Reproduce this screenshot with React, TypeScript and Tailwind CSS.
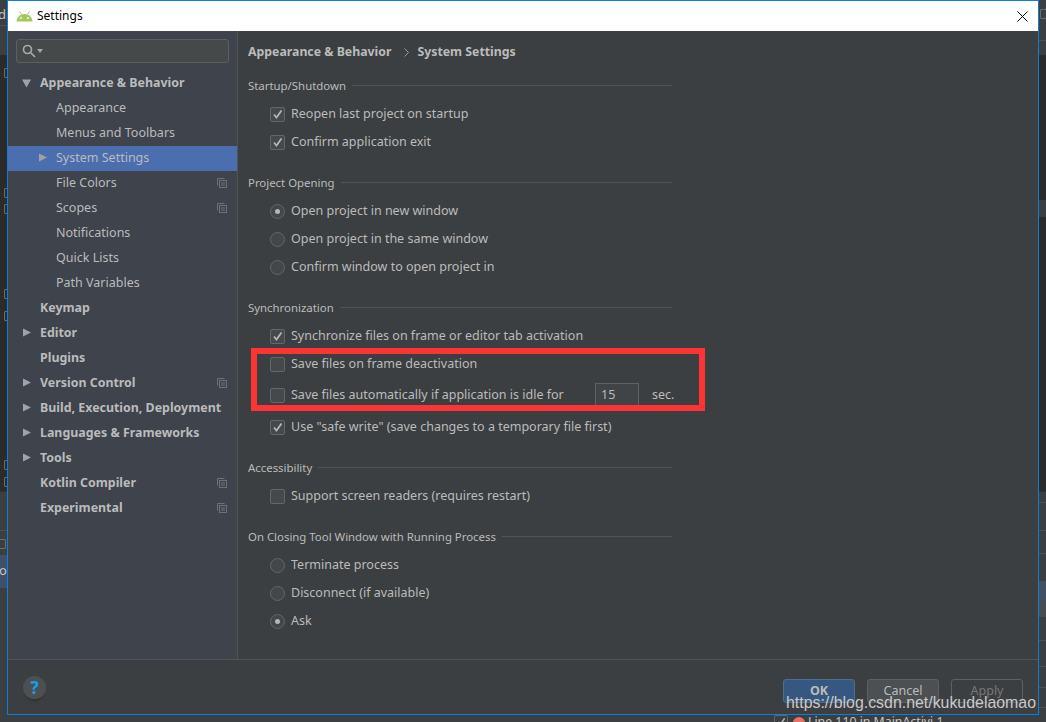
import React from "react";

const font = "[font-family:'Noto_Sans',sans-serif]";

function Copy() {
  return (
    <svg width="10" height="10" viewBox="0 0 10 10" fill="none" stroke="#6f7274" strokeWidth="1" className="mb-[2px] shrink-0">
      <path d="M0.5 7.5V0.5H7.5" />
      <rect x="2.5" y="2.5" width="7" height="7" />
      <path d="M4 5H8M4 7H8" />
    </svg>
  );
}

function Arrow({ down }: { down?: boolean }) {
  return (
    <svg width="9" height="9" viewBox="0 0 9 9" fill="#a0a2a4" className="block shrink-0">
      {down ? <path d="M0 0.5H9L4.5 8.5Z" /> : <path d="M0 0.5L8 4.5L0 8.5Z" />}
    </svg>
  );
}

function Nav({ label, level = 0, arrow, copy, selected }: { label: string; level?: 0 | 1; arrow?: "right" | "down"; copy?: boolean; selected?: boolean }) {
  return (
    <div className={`relative flex h-[25px] items-center pr-[10px] ${selected ? "bg-[#4b6eaf]" : ""} ${level === 0 ? "pl-[32px] text-[12.4px] font-bold" : "pl-[48px] text-[12.5px]"}`}>
      {arrow && (
        <span className={`absolute ${arrow === "down" ? "left-[14px] top-[8px]" : level === 0 ? "left-[15px] top-[7px]" : "left-[31px] top-[7px]"}`}>
          <Arrow down={arrow === "down"} />
        </span>
      )}
      <span className="flex-1 whitespace-nowrap">{label}</span>
      {copy && <Copy />}
    </div>
  );
}

function Heading({ label, first }: { label: string; first?: boolean }) {
  return (
    <div className={`flex h-5 items-center gap-[6px] text-[11.4px] ${first ? "" : "mt-[17px]"}`}>
      <span className="whitespace-nowrap">{label}</span>
      <span className="mt-[-2px] h-px flex-1 bg-[#515355]" />
    </div>
  );
}

function Check({ on }: { on?: boolean }) {
  return (
    <span className="flex h-[15px] w-[15px] shrink-0 items-center justify-center rounded-[2px] border border-[#646769] bg-[#45494b]">
      {on && (
        <svg width="11" height="11" viewBox="0 0 11 11" fill="none" stroke="#b4b6b7" strokeWidth="1.8">
          <path d="M2 5.5L4.5 8.5L9.5 1.5" />
        </svg>
      )}
    </span>
  );
}

function Radio({ on }: { on?: boolean }) {
  return (
    <span className="flex h-[15px] w-[15px] shrink-0 items-center justify-center rounded-full border border-[#646769] bg-[#43474a]">
      {on && <span className="h-[5px] w-[5px] rounded-full bg-[#b4b6b7]" />}
    </span>
  );
}

function Row({ children, control, cls = "" }: { children: React.ReactNode; control: React.ReactNode; cls?: string }) {
  return (
    <div className={`flex h-7 items-center gap-[6px] pl-[22px] text-[12.5px] ${cls}`}>
      {control}
      {children}
    </div>
  );
}

function Btn({ label, cls }: { label: string; cls: string }) {
  return (
    <div className={`flex h-[24px] w-[72px] items-center justify-center rounded-[3px] border pt-px text-[12.5px] ${cls}`}>{label}</div>
  );
}

function Android() {
  return (
    <svg width="17" height="11" viewBox="0 0 17 11" fill="#a2c95c">
      <path d="M0.5 10.5C0.8 6 4 3 8.5 3C13 3 16.2 6 16.5 10.5Z" />
      <path d="M3.5 0.5L5.5 3.5M13.5 0.5L11.5 3.5" stroke="#a2c95c" strokeWidth="1" />
      <circle cx="5" cy="7" r="0.9" fill="#fff" />
      <circle cx="12" cy="7" r="0.9" fill="#fff" />
    </svg>
  );
}

function StripIcon({ top, left }: { top: string; left: string }) {
  return <span className={`absolute h-[10px] w-[10px] rounded-[1px] border border-[#6a6d6f] ${top} ${left}`} />;
}

function LeftStrip() {
  return (
    <div className="relative flex h-full w-[7px] flex-col overflow-hidden">
      <div className="h-[25px] bg-[#3c3f41] pt-[8px] text-[13px] leading-none text-[#c4c4c4]"><span className="ml-[-2px] whitespace-nowrap">dr</span></div>
      <div className="h-[30px] border-t border-[#515151] bg-[#3c3f41]" />
      <div className="h-[436px] bg-[#2b2b2b]" />
      <div className="h-[39px] border-t border-[#323232] bg-[#3c3f41]" />
      <div className="h-[25px] border-t border-[#515151] bg-[#3c3f41]" />
      <div className="h-[33px] bg-[#3f5068] pt-[9px] text-[13px] leading-none text-[#c4c4c4]"><span className="ml-[-1px] whitespace-nowrap">ol</span></div>
      <div className="flex-1 bg-[#3c3f41]" />
      <StripIcon top="top-[68px]" left="left-[4px]" />
      <StripIcon top="top-[188px]" left="left-[4px]" />
      <StripIcon top="top-[204px]" left="left-[4px]" />
      <StripIcon top="top-[289px]" left="left-[4px]" />
      <StripIcon top="top-[311px]" left="left-[4px]" />
      <StripIcon top="top-[460px]" left="left-[4px]" />
      <StripIcon top="top-[477px]" left="left-[4px]" />
      <StripIcon top="top-[539px]" left="left-[-4px]" />
    </div>
  );
}

function RightStrip() {
  return (
    <div className="relative flex h-full w-[7px] flex-col overflow-hidden">
      <div className="h-[40px] bg-[#3c3f41]" />
      <div className="h-[15px] border-t border-[#515151] bg-[#3c3f41]" />
      <div className="h-[145px] bg-[#2b2b2b]" />
      <div className="h-[17px] bg-[#3c3f41]" />
      <div className="h-[274px] bg-[#2b2b2b]" />
      <div className="h-[11px] border-t border-[#323232] bg-[#3c3f41]" />
      <div className="h-[28px] border-t border-[#515151] bg-[#3c3f41]" />
      <div className="h-[23px] border-t border-[#515151] bg-[#3c3f41]" />
      <div className="h-[28px] border-t border-[#515151] bg-[#3c3f41]" />
      <div className="h-[20px] bg-[#44505f]" />
      <div className="h-[16px] bg-[#4a4d4f]" />
      <div className="h-[23px] bg-[#3c3f41]" />
      <div className="h-[26px] border-t border-[#515151] bg-[#3c3f41]" />
      <div className="h-[21px] border-t border-[#515151] bg-[#3c3f41]" />
      <div className="h-[20px] border-t border-[#515151] bg-[#3c3f41]" />
      <div className="flex-1 border-t border-[#515151] bg-[#3c3f41]" />
      <StripIcon top="top-[9px]" left="left-[1px]" />
    </div>
  );
}

export default function App() {
  return (
    <div className={`relative h-[722px] w-[1046px] overflow-hidden bg-[#3c3f41] text-[#bbbbbb] ${font}`}>
      <div className="flex h-full justify-between">
        <LeftStrip />
        <RightStrip />
      </div>

      {/* what shows under the dialog */}
      <div className="absolute left-[774px] top-[715px] flex items-center text-[12.3px] leading-[14px] text-[#c4c4c4]">
        <span className="flex h-[14px] w-[14px] items-center justify-center rounded-[2px] border border-[#646769]">
          <svg width="10" height="10" viewBox="0 0 11 11" fill="none" stroke="#b4b6b7" strokeWidth="1.8"><path d="M2 5.5L4.5 8.5L9.5 1.5" /></svg>
        </span>
        <span className="ml-[5px] mt-[2px] h-[12px] w-[12px] rounded-full bg-[#e57368]" />
        <span className="ml-[3px] whitespace-nowrap">Line 110 in MainActivi 1</span>
      </div>

      {/* dialog */}
      <div className="absolute left-[7px] top-0 flex h-[715px] w-[1032px] flex-col border border-[#0e7fd8] bg-[#3c3f41]">
        <div className="flex h-[30px] shrink-0 items-center bg-white pl-[8px] pr-[10px] text-[12px] text-black">
          <Android />
          <span className="ml-[4px] flex-1">Settings</span>
          <svg width="11" height="11" viewBox="0 0 11 11" stroke="#000" strokeWidth="1" fill="none">
            <path d="M0.5 0.5L10.5 10.5M10.5 0.5L0.5 10.5" />
          </svg>
        </div>

        <div className="flex min-h-0 flex-1 border-b border-[#515355]">
          <aside className="flex w-[230px] shrink-0 flex-col border-r border-[#515355] bg-[#3e434c]">
            <div className="mx-[8px] mb-[8px] mt-[8px] flex h-[24px] items-center gap-[1px] rounded-[3px] border border-[#5d5f60] bg-[#45494a] pl-[5px]">
              <svg width="14" height="14" viewBox="0 0 14 14" fill="none" stroke="#a6a8a9" strokeWidth="1.7">
                <circle cx="5.5" cy="5.5" r="4" />
                <path d="M8.5 8.5L13 13" />
              </svg>
              <svg width="6" height="4" viewBox="0 0 6 4" fill="#a6a8a9"><path d="M0 0H6L3 4Z" /></svg>
            </div>
            <Nav label="Appearance & Behavior" arrow="down" />
            <Nav label="Appearance" level={1} />
            <Nav label="Menus and Toolbars" level={1} />
            <Nav label="System Settings" level={1} arrow="right" selected />
            <Nav label="File Colors" level={1} copy />
            <Nav label="Scopes" level={1} copy />
            <Nav label="Notifications" level={1} />
            <Nav label="Quick Lists" level={1} />
            <Nav label="Path Variables" level={1} />
            <Nav label="Keymap" />
            <Nav label="Editor" arrow="right" />
            <Nav label="Plugins" />
            <Nav label="Version Control" arrow="right" copy />
            <Nav label="Build, Execution, Deployment" arrow="right" />
            <Nav label="Languages & Frameworks" arrow="right" />
            <Nav label="Tools" arrow="right" />
            <Nav label="Kotlin Compiler" copy />
            <Nav label="Experimental" copy />
          </aside>

          <main className="w-[434px] pl-[10px] pt-[11px]">
            <div className="flex h-5 items-center text-[12.3px] font-bold">
              <span>Appearance &amp; Behavior</span>
              <svg width="5" height="9" viewBox="0 0 5 9" fill="none" stroke="#9a9c9e" className="ml-[13px] mr-[8px]"><path d="M0.5 0.5L4.5 4.5L0.5 8.5" /></svg>
              <span>System Settings</span>
            </div>
            <div className="mt-[14px]">
              <Heading label="Startup/Shutdown" first />
              <div className="mt-[4px]">
                <Row control={<Check on />}>Reopen last project on startup</Row>
                <Row control={<Check on />}>Confirm application exit</Row>
              </div>
              <Heading label="Project Opening" />
              <div className="mt-[4px]">
                <Row control={<Radio on />}>Open project in new window</Row>
                <Row control={<Radio />}>Open project in the same window</Row>
                <Row control={<Radio />}>Confirm window to open project in</Row>
              </div>
              <Heading label="Synchronization" />
              <div className="mt-[4px]">
                <Row control={<Check on />}>Synchronize files on frame or editor tab activation</Row>
                <Row control={<Check />}>Save files on frame deactivation</Row>
                <Row control={<Check />} cls="mt-[3px]">
                  <span className="w-[298px] shrink-0 whitespace-nowrap">Save files automatically if application is idle for</span>
                  <span className="flex h-[24px] w-[44px] shrink-0 items-center border border-[#5f6163] bg-[#414446] pl-[5px]">15</span>
                  <span className="ml-[7px] shrink-0">sec.</span>
                </Row>
                <Row control={<Check on />} cls="mt-[4px]">Use "safe write" (save changes to a temporary file first)</Row>
              </div>
              <Heading label="Accessibility" />
              <div className="mt-[4px]">
                <Row control={<Check />}>Support screen readers (requires restart)</Row>
              </div>
              <Heading label="On Closing Tool Window with Running Process" />
              <div className="mt-[4px]">
                <Row control={<Radio />}>Terminate process</Row>
                <Row control={<Radio />}>Disconnect (if available)</Row>
                <Row control={<Radio on />}>Ask</Row>
              </div>
            </div>
          </main>
        </div>

        <div className="flex h-[54px] shrink-0 items-start pl-[15px] pr-[15px] pt-[19px]">
          <div className="mt-[-3px] flex h-[23px] w-[23px] items-center justify-center rounded-full bg-[#4c5052] text-[17px] font-bold leading-none text-[#18a0ea] shadow-[0_5px_3px_-3px_rgba(0,0,0,0.25)]">?</div>
          <div className="ml-auto flex gap-[12px]">
            <Btn label="OK" cls="border-[#4c708c] bg-[#365880] font-bold" />
            <Btn label="Cancel" cls="border-[#5e6060] bg-[#4c5052]" />
            <Btn label="Apply" cls="border-[#5e6060] text-[#777777]" />
          </div>
        </div>
      </div>

      {/* annotation */}
      <div className="absolute left-[251px] top-[348px] h-[63px] w-[454px] border-[6px] border-[#fe3333]" />

      {/* watermark */}
      <div className="absolute left-[786px] top-[693px] whitespace-nowrap text-[15.9px] leading-[20px] text-[#c9c9c9] [font-family:'Liberation_Sans',sans-serif]">https://blog.csdn.net/kukudelaomao</div>
    </div>
  );
}
